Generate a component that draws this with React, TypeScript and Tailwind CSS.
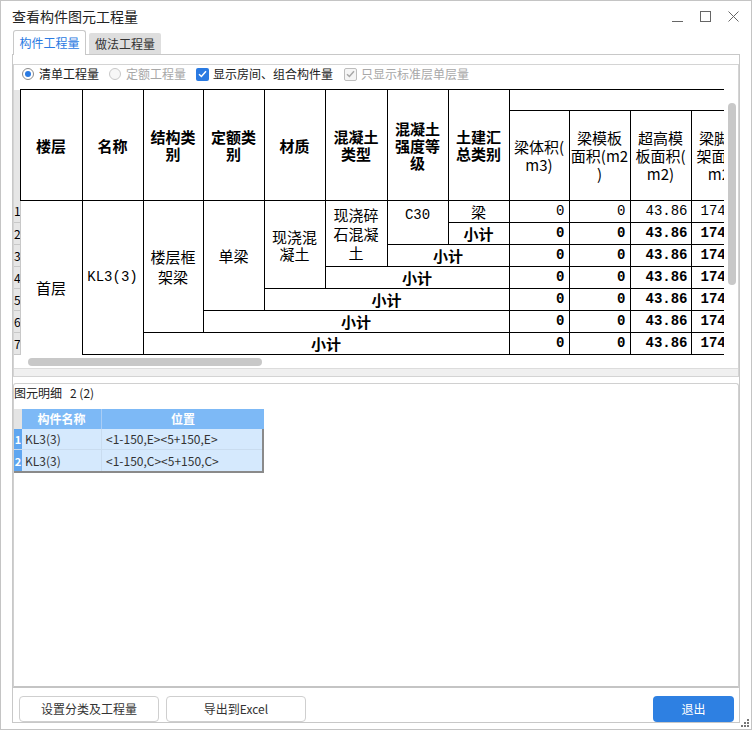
import type { ReactNode } from "react";

const ui = "font-['Noto_Sans_CJK_SC','Noto_Sans',sans-serif]";
const mono = "font-['Liberation_Mono','Noto_Sans_CJK_SC',monospace]";

function Hd({ children, rowSpan }: { children: ReactNode; rowSpan?: number }) {
  return (
    <td
      rowSpan={rowSpan}
      className="border border-black p-0 text-center align-middle text-[15px] font-bold leading-[17px]"
    >
      {children}
    </td>
  );
}

function Sub({ children }: { children: ReactNode }) {
  return (
    <td className="overflow-hidden whitespace-nowrap border border-black p-0 text-center align-middle text-[15px] leading-[18px]">
      {children}
    </td>
  );
}

function RowNo({ n }: { n: number }) {
  return (
    <td className="overflow-hidden border-b border-r border-[#c8c8c8] bg-[#e6e6e6] p-0 text-left align-middle text-[12px] leading-none">
      {n}
    </td>
  );
}

function Sum({ span }: { span: number }) {
  return (
    <td colSpan={span} className="border border-black p-0 text-center align-middle text-[15px] font-bold leading-[17px]">
      小计
    </td>
  );
}

function Nums({ bold }: { bold?: boolean }) {
  const w = bold ? "font-bold" : "font-normal";
  return (
    <>
      <td className={`border border-black p-0 pr-[4px] text-right align-middle text-[14px] ${mono} ${w}`}>0</td>
      <td className={`border border-black p-0 pr-[4px] text-right align-middle text-[14px] ${mono} ${w}`}>0</td>
      <td className={`border border-black p-0 pr-[3px] text-right align-middle text-[14px] ${mono} ${w}`}>43.86</td>
      <td className={`overflow-hidden whitespace-nowrap border border-black p-0 pl-[9px] text-left align-middle text-[14px] ${mono} ${w}`}>174</td>
    </>
  );
}

function QtyTable() {
  const widths = ["w-[6px]", "w-[62px]", "w-[61px]", "w-[60px]", "w-[61px]", "w-[61px]", "w-[62px]", "w-[61px]", "w-[61px]", "w-[60px]", "w-[61px]", "w-[61px]", "w-[61px]"];
  return (
    <table className={`w-[738px] table-fixed border-collapse text-black ${ui}`}>
      <colgroup>
        {widths.map((w, i) => (
          <col key={i} className={w} />
        ))}
      </colgroup>
      <tbody>
        <tr className="h-[21px]">
          <td rowSpan={2} className="border-r border-black bg-[#e6e6e6] p-0" />
          <Hd rowSpan={2}>楼层</Hd>
          <Hd rowSpan={2}>名称</Hd>
          <Hd rowSpan={2}>结构类<br />别</Hd>
          <Hd rowSpan={2}>定额类<br />别</Hd>
          <Hd rowSpan={2}>材质</Hd>
          <Hd rowSpan={2}>混凝土<br />类型</Hd>
          <Hd rowSpan={2}>混凝土<br />强度等<br />级</Hd>
          <Hd rowSpan={2}>土建汇<br />总类别</Hd>
          <td colSpan={4} className="border-l border-t border-black p-0" />
        </tr>
        <tr className="h-[90px]">
          <Sub>梁体积(<br />m3)</Sub>
          <Sub>梁模板<br />面积(m2<br />)</Sub>
          <Sub>超高模<br />板面积(<br />m2)</Sub>
          <Sub>梁脚手<br />架面积(<br />m2)</Sub>
        </tr>
        <tr className="h-[22px]">
          <RowNo n={1} />
          <td rowSpan={7} className="border-r border-t border-black p-0 pt-[20px] text-center align-middle text-[15px] leading-[17px]">首层</td>
          <td rowSpan={7} className={`border border-black p-0 text-center align-middle text-[14px] ${mono}`}>KL3(3)</td>
          <td rowSpan={6} className="border border-black p-0 text-center align-middle text-[15px] leading-[20px]">楼层框<br />架梁</td>
          <td rowSpan={5} className="border border-black p-0 text-center align-middle text-[15px] leading-[17px]">单梁</td>
          <td rowSpan={4} className="border border-black p-0 text-center align-middle text-[15px] leading-[17px]">现浇混<br />凝土</td>
          <td rowSpan={3} className="border border-black p-0 text-center align-middle text-[15px] leading-[19px]">现浇碎<br />石混凝<br />土</td>
          <td rowSpan={2} className={`border border-black p-0 pb-[14px] text-center align-middle text-[14px] ${mono}`}>C30</td>
          <td className="border border-black p-0 text-center align-middle text-[15px] leading-[17px]">梁</td>
          <Nums />
        </tr>
        <tr className="h-[22px]">
          <RowNo n={2} />
          <Sum span={1} />
          <Nums bold />
        </tr>
        <tr className="h-[22px]">
          <RowNo n={3} />
          <Sum span={2} />
          <Nums bold />
        </tr>
        <tr className="h-[22px]">
          <RowNo n={4} />
          <Sum span={3} />
          <Nums bold />
        </tr>
        <tr className="h-[22px]">
          <RowNo n={5} />
          <Sum span={4} />
          <Nums bold />
        </tr>
        <tr className="h-[22px]">
          <RowNo n={6} />
          <Sum span={5} />
          <Nums bold />
        </tr>
        <tr className="h-[22px]">
          <RowNo n={7} />
          <Sum span={6} />
          <Nums bold />
        </tr>
      </tbody>
    </table>
  );
}

function Radio({ on }: { on?: boolean }) {
  return on ? (
    <span className="flex h-[12px] w-[12px] items-center justify-center rounded-full border border-[#8a8a8a] bg-white">
      <span className="h-[6px] w-[6px] rounded-full bg-[#2a7ae2]" />
    </span>
  ) : (
    <span className="block h-[12px] w-[12px] rounded-full border border-[#c8c8c8] bg-[#f7f7f7]" />
  );
}

function Check({ disabled }: { disabled?: boolean }) {
  return (
    <span
      className={
        disabled
          ? "flex h-[13px] w-[13px] items-center justify-center rounded-[2px] border border-[#bdbdbd] bg-[#f5f5f5]"
          : "flex h-[13px] w-[13px] items-center justify-center rounded-[2px] bg-[#2a7ae2]"
      }
    >
      <svg width="9" height="8" viewBox="0 0 9 8" fill="none">
        <path d="M1 4.2 3.4 6.5 8 1.2" stroke={disabled ? "#a8a8a8" : "#ffffff"} strokeWidth="1.5" />
      </svg>
    </span>
  );
}

function Btn({ children, primary, w }: { children: ReactNode; primary?: boolean; w: string }) {
  return (
    <button
      className={
        primary
          ? `h-[26px] ${w} rounded-[4px] bg-[#2e80e2] text-[12px] text-white`
          : `h-[26px] ${w} rounded-[4px] border border-[#cfcfcf] bg-white text-[12px] text-[#333]`
      }
    >
      {children}
    </button>
  );
}

export default function App() {
  return (
    <div className={`relative h-[730px] w-[752px] border border-[#c4c4c4] bg-white text-[#333] ${ui}`}>
      {/* title bar */}
      <div className="flex h-[29px] items-center justify-between pl-[11px] pr-[12px] pt-[2px]">
        <span className="text-[14px] text-[#222]">查看构件图元工程量</span>
        <div className="flex items-center gap-[17px] text-[#666]">
          <svg width="11" height="11" viewBox="0 0 11 11">
            <path d="M0 10.5h11" stroke="#666" strokeWidth="1" />
          </svg>
          <svg width="11" height="11" viewBox="0 0 11 11">
            <rect x="0.5" y="0.5" width="10" height="10" fill="none" stroke="#666" strokeWidth="1" />
          </svg>
          <svg width="11" height="11" viewBox="0 0 11 11">
            <path d="M0.5 0.5l10 10M10.5 0.5l-10 10" stroke="#666" strokeWidth="1" />
          </svg>
        </div>
      </div>

      {/* tabs */}
      <div className="flex h-[24px] items-end gap-[3px] pl-[12px]">
        <div className="relative z-10 -mb-px flex h-[25px] w-[73px] items-center justify-center rounded-t-[3px] border border-b-0 border-[#c8c8c8] bg-white text-[12px] text-[#2a7ae2]">
          构件工程量
        </div>
        <div className="flex h-[21px] w-[72px] items-center justify-center rounded-t-[2px] bg-[#dedede] text-[12px] text-[#333]">
          做法工程量
        </div>
      </div>

      {/* tab panel */}
      <div className="ml-[11px] flex h-[669px] w-[728px] flex-col border border-[#c8c8c8]">
        {/* upper box */}
        <div className="mt-[9px] flex h-[314px] flex-col border border-[#d4d4d4]">
          <div className="flex h-[18px] items-center pl-[8px] text-[12px]">
            <Radio on />
            <span className="ml-[5px] text-[#222]">清单工程量</span>
            <span className="ml-[10px] flex">
              <Radio />
            </span>
            <span className="ml-[5px] text-[#a8a8a8]">定额工程量</span>
            <span className="ml-[10px] flex">
              <Check />
            </span>
            <span className="ml-[4px] text-[#222]">显示房间、组合构件量</span>
            <span className="ml-[11px] flex">
              <Check disabled />
            </span>
            <span className="ml-[4px] text-[#a8a8a8]">只显示标准层单层量</span>
          </div>
          <div className="flex h-[285px]">
            <div className="flex w-[710px] flex-col pt-[6px]">
              <div className="h-[267px] overflow-hidden">
                <QtyTable />
              </div>
              <div className="ml-[14px] mt-[2px] h-[8px] w-[234px] rounded-full bg-[#c8c8c8]" />
            </div>
            <div className="w-[14px] pl-[4px] pt-[20px]">
              <div className="h-[182px] w-[8px] rounded-full bg-[#c8c8c8]" />
            </div>
          </div>
          <div className="flex-1 border-t border-[#dcdcdc] bg-[#f0f0f0]" />
        </div>

        {/* lower box */}
        <div className="mt-[6px] flex h-[305px] flex-col rounded-t-[3px] border border-b-2 border-[#d0d0d0] border-b-[#c4c4c4]">
          <div className="flex h-[17px] items-center gap-[8px] text-[12px] text-[#222]">
            <span>图元明细</span>
            <span>2 (2)</span>
          </div>
          <div className="mt-[8px] w-[250px] text-[12px]">
            <div className="flex h-[20px]">
              <div className="w-[8px] bg-[#e4e4e4]" />
              <div className="flex w-[80px] items-center justify-center border-r border-[#a9cdf5] bg-[#7db9f6] font-bold text-white">
                构件名称
              </div>
              <div className="flex w-[162px] items-center justify-center bg-[#7db9f6] font-bold text-white">位置</div>
            </div>
            <div className="border-b-2 border-r-2 border-[#8a8a8a]">
              {["<1-150,E><5+150,E>", "<1-150,C><5+150,C>"].map((pos, i) => (
                <div key={i} className="flex h-[21px] border-b border-[#c9dcef] last:border-b-0">
                  <div className="flex w-[8px] items-center justify-center bg-[#5fa6f0] text-[11px] font-bold text-white">
                    {i + 1}
                  </div>
                  <div className="flex w-[80px] items-center border-r border-[#c9dcef] bg-[#d5e9fd] pl-[3px] text-[#333]">
                    KL3(3)
                  </div>
                  <div className="flex w-[160px] items-center bg-[#d5e9fd] pl-[4px] text-[#333]">{pos}</div>
                </div>
              ))}
            </div>
          </div>
        </div>

        {/* buttons */}
        <div className="mt-[7px] flex items-center pl-[6px] pr-[5px]">
          <Btn w="w-[140px]">设置分类及工程量</Btn>
          <span className="ml-[7px]">
            <Btn w="w-[140px]">导出到Excel</Btn>
          </span>
          <span className="ml-auto">
            <Btn primary w="w-[81px]">退出</Btn>
          </span>
        </div>
      </div>

      {/* resize grip */}
      <svg className="absolute bottom-[1px] right-[1px]" width="10" height="10" viewBox="0 0 10 10">
        <rect x="7" y="1" width="2" height="2" fill="#777" />
        <rect x="4" y="4" width="2" height="2" fill="#777" />
        <rect x="7" y="4" width="2" height="2" fill="#777" />
        <rect x="1" y="7" width="2" height="2" fill="#777" />
        <rect x="4" y="7" width="2" height="2" fill="#777" />
        <rect x="7" y="7" width="2" height="2" fill="#777" />
      </svg>
    </div>
  );
}
